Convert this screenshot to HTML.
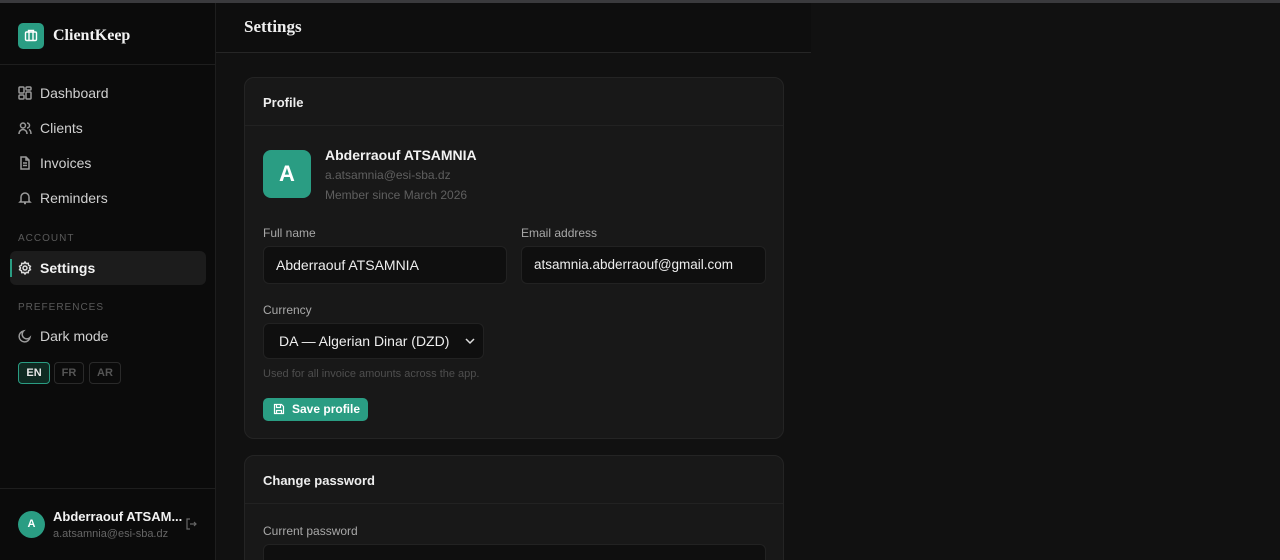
<!DOCTYPE html>
<html style="width:1280px;height:560px;overflow:hidden"><head><meta charset="utf-8"><style>
*{box-sizing:border-box;margin:0;padding:0}
body{width:1280px;height:560px;overflow:hidden;background:#111;font-family:"Liberation Sans",sans-serif;color:#e8e8e8;position:relative}
.top{position:absolute;left:0;top:0;width:1280px;height:3px;background:#3a3a3d}
.side{position:absolute;left:0;top:3px;width:216px;height:557px;background:#0b0b0b;border-right:1px solid #1e1e1e}
.logo{position:absolute;left:18px;top:20px;width:26px;height:26px;border-radius:5px;background:#2a9d83}
.brand{position:absolute;left:53px;top:24px;font-family:"Liberation Serif",serif;font-weight:bold;font-size:16px;color:#f2f2f2}
.sep{position:absolute;left:0;width:215px;height:1px;background:#1e1e1e}
.nav{position:absolute;left:18px;font-size:14px;color:#d0d0d0;display:flex;align-items:center;gap:8px}
.nav svg{width:14px;height:14px;stroke:#9a9a9a;fill:none;stroke-width:1.5}
.lab{position:absolute;left:18px;font-size:10px;letter-spacing:1px;color:#5a5a5a}
.act{position:absolute;left:10px;top:248px;width:196px;height:34px;background:#1c1c1c;border-radius:6px}
.act:before{content:"";position:absolute;left:0;top:8px;width:2px;height:18px;background:#2a9d83}
.lang{position:absolute;top:359px;height:22px;border:1px solid #2a2a2a;border-radius:4px;font-size:11px;font-weight:bold;color:#555;text-align:center;line-height:20px}
.hdr{position:absolute;left:216px;top:3px;width:595px;height:50px;background:#0e0e0e;border-bottom:1px solid #262626}
.hdr span{position:absolute;left:28px;top:14px;font-family:"Liberation Serif",serif;font-weight:bold;font-size:17px;color:#eee}
.main{position:absolute;left:0;top:0;width:1280px;height:560px;overflow:hidden}
.card{position:absolute;left:244px;width:540px;background:#181818;border:1px solid #242424;border-radius:10px}
.ch{height:48px;border-bottom:1px solid #222;padding:17px 18px;font-size:13px;font-weight:bold;color:#eee}
.flab{position:absolute;font-size:12px;color:#a8a8a8}
.inp{position:absolute;height:38px;background:#0f0f0f;border:1px solid #222;border-radius:6px;font-size:14px;color:#eee;padding:10px 12px}
</style></head><body>
<div class="top"></div>
<div class="side">
<div class="logo"><svg width="26" height="26" viewBox="0 0 26 26" fill="none" stroke="#fff" stroke-width="1.4"><rect x="7.5" y="9" width="11" height="8.5" rx="1.2"/><path d="M10.5 9V7.5h5V9M11 9v8.5M15 9v8.5"/></svg></div>
<div class="brand">ClientKeep</div>
<div class="sep" style="top:61px"></div>
<div class="nav" style="top:82px"><svg viewBox="0 0 14 14"><rect x="1" y="1" width="5" height="6" rx="1"/><rect x="8" y="1" width="5" height="3" rx="1"/><rect x="8" y="6" width="5" height="7" rx="1"/><rect x="1" y="9" width="5" height="4" rx="1"/></svg>Dashboard</div>
<div class="nav" style="top:117px"><svg viewBox="0 0 14 14"><circle cx="5" cy="4.5" r="2.5"/><path d="M1 13c0-3 2-4.5 4-4.5s4 1.5 4 4.5M9 2a2.5 2.5 0 0 1 0 5M11 8.5c1.3.6 2 2 2 4.5"/></svg>Clients</div>
<div class="nav" style="top:152px"><svg viewBox="0 0 14 14"><path d="M3 1h5l3 3v9H3z M8 1v3h3M5 7h4M5 9.5h4"/></svg>Invoices</div>
<div class="nav" style="top:187px"><svg viewBox="0 0 14 14"><path d="M3 10V6a4 4 0 0 1 8 0v4l1 1H2zM6 12.5h2"/></svg>Reminders</div>
<div class="lab" style="top:230px">ACCOUNT</div>
<div class="act"></div>
<div class="nav" style="top:257px;font-weight:bold;color:#f2f2f2"><svg viewBox="0 0 14 14" style="stroke:#ddd"><circle cx="7" cy="7" r="2"/><path d="M7 1l1.2 1.6 2-.3.4 2 1.8 1-.9 1.7.9 1.7-1.8 1-.4 2-2-.3L7 13l-1.2-1.6-2 .3-.4-2-1.8-1 .9-1.7-.9-1.7 1.8-1 .4-2 2 .3z"/></svg>Settings</div>
<div class="lab" style="top:299px">PREFERENCES</div>
<div class="nav" style="top:325px"><svg viewBox="0 0 14 14"><path d="M12 8.5A5.5 5.5 0 1 1 5.5 2 4.5 4.5 0 0 0 12 8.5z"/></svg>Dark mode</div>
<div class="lang" style="left:18px;width:32px;border-color:#2a9d83;background:#0f2a22;color:#e8e8e8">EN</div>
<div class="lang" style="left:54px;width:30px">FR</div>
<div class="lang" style="left:89px;width:32px">AR</div>
<div class="sep" style="top:485px"></div>
<div style="position:absolute;left:18px;top:508px;width:27px;height:27px;border-radius:50%;background:#2a9d83;color:#fff;font-size:11px;font-weight:bold;text-align:center;line-height:27px">A</div>
<div style="position:absolute;left:53px;top:506px;font-size:13px;font-weight:bold;color:#f2f2f2">Abderraouf ATSAM...</div>
<div style="position:absolute;left:53px;top:525px;font-size:11px;color:#666">a.atsamnia@esi-sba.dz</div>
<svg style="position:absolute;left:185px;top:515px" width="12" height="12" viewBox="0 0 12 12" fill="none" stroke="#666" stroke-width="1.2"><path d="M5 1H2v10h3M5 6h6M9 4l2 2-2 2"/></svg>
</div>
<div class="hdr"><span>Settings</span></div>
<div class="main">
<div class="card" style="top:77px;height:362px">
<div class="ch">Profile</div>
<div style="position:absolute;left:18px;top:72px;width:48px;height:48px;border-radius:8px;background:#2a9d83;color:#fff;font-size:22px;font-weight:bold;text-align:center;line-height:48px">A</div>
<div style="position:absolute;left:80px;top:69px;font-size:14px;font-weight:bold;color:#f2f2f2">Abderraouf ATSAMNIA</div>
<div style="position:absolute;left:80px;top:90px;font-size:12px;color:#5f5f5f">a.atsamnia@esi-sba.dz</div>
<div style="position:absolute;left:80px;top:110px;font-size:12px;color:#5f5f5f">Member since March 2026</div>
<div class="flab" style="left:18px;top:148px">Full name</div>
<div class="inp" style="left:18px;top:168px;width:244px">Abderraouf ATSAMNIA</div>
<div class="flab" style="left:276px;top:148px">Email address</div>
<div class="inp" style="left:276px;top:168px;width:245px;font-size:13.5px">atsamnia.abderraouf@gmail.com</div>
<div class="flab" style="left:18px;top:225px">Currency</div>
<div class="inp" style="left:18px;top:245px;width:221px;height:36px;padding:9px 15px">DA — Algerian Dinar (DZD)<svg style="position:absolute;right:8px;top:13px" width="10" height="8" viewBox="0 0 10 8" fill="none" stroke="#ddd" stroke-width="1.5"><path d="M1 2l4 4 4-4"/></svg></div>
<div style="position:absolute;left:18px;top:290px;font-size:11px;color:#4e4e4e">Used for all invoice amounts across the app.</div>
<div style="position:absolute;left:18px;top:320px;width:105px;height:23px;border-radius:5px;background:#2a9d83;color:#fff;font-size:12px;font-weight:bold;line-height:23px;padding-left:29px"><svg style="position:absolute;left:10px;top:5px" width="12" height="12" viewBox="0 0 12 12" fill="none" stroke="#fff" stroke-width="1.2"><path d="M1.5 1.5h7l2 2v7h-9z M3.5 1.5v3h4v-3M3.5 10.5v-3h5v3"/></svg>Save profile</div>
</div>
<div class="card" style="top:455px;height:120px">
<div class="ch">Change password</div>
<div class="flab" style="left:18px;top:68px">Current password</div>
<div class="inp" style="left:18px;top:88px;width:503px"></div>
</div>
</div>
</body></html>
